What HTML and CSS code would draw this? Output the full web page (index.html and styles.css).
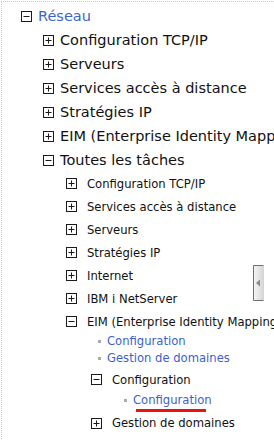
FILE: index.html
```html
<!DOCTYPE html>
<html lang="fr">
<head>
<meta charset="utf-8">
<link rel="stylesheet" href="styles.css">
</head>
<body>
<div class="pane">
  <ul class="tree root">
    <li>
      <div class="row r0"><svg class="box" viewBox="0 0 11 11"><rect x="0.5" y="0.5" width="10" height="10"/><path d="M2.5 5.5h6"/></svg><span class="lbl top">Réseau</span></div>
      <ul class="tree l1">
        <li><div class="row r1"><svg class="box" viewBox="0 0 11 11"><rect x="0.5" y="0.5" width="10" height="10"/><path d="M2.5 5.5h6M5.5 2.5v6"/></svg><span class="lbl">Configuration TCP/IP</span></div></li>
        <li><div class="row r1"><svg class="box" viewBox="0 0 11 11"><rect x="0.5" y="0.5" width="10" height="10"/><path d="M2.5 5.5h6M5.5 2.5v6"/></svg><span class="lbl">Serveurs</span></div></li>
        <li><div class="row r1"><svg class="box" viewBox="0 0 11 11"><rect x="0.5" y="0.5" width="10" height="10"/><path d="M2.5 5.5h6M5.5 2.5v6"/></svg><span class="lbl">Services accès à distance</span></div></li>
        <li><div class="row r1"><svg class="box" viewBox="0 0 11 11"><rect x="0.5" y="0.5" width="10" height="10"/><path d="M2.5 5.5h6M5.5 2.5v6"/></svg><span class="lbl">Stratégies IP</span></div></li>
        <li><div class="row r1"><svg class="box" viewBox="0 0 11 11"><rect x="0.5" y="0.5" width="10" height="10"/><path d="M2.5 5.5h6M5.5 2.5v6"/></svg><span class="lbl">EIM (Enterprise Identity Mapping)</span></div></li>
        <li>
          <div class="row r1"><svg class="box" viewBox="0 0 11 11"><rect x="0.5" y="0.5" width="10" height="10"/><path d="M2.5 5.5h6"/></svg><span class="lbl">Toutes les tâches</span></div>
          <ul class="tree l2">
            <li><div class="row r2"><svg class="box" viewBox="0 0 11 11"><rect x="0.5" y="0.5" width="10" height="10"/><path d="M2.5 5.5h6M5.5 2.5v6"/></svg><span class="lbl">Configuration TCP/IP</span></div></li>
            <li><div class="row r2"><svg class="box" viewBox="0 0 11 11"><rect x="0.5" y="0.5" width="10" height="10"/><path d="M2.5 5.5h6M5.5 2.5v6"/></svg><span class="lbl">Services accès à distance</span></div></li>
            <li><div class="row r2"><svg class="box" viewBox="0 0 11 11"><rect x="0.5" y="0.5" width="10" height="10"/><path d="M2.5 5.5h6M5.5 2.5v6"/></svg><span class="lbl">Serveurs</span></div></li>
            <li><div class="row r2"><svg class="box" viewBox="0 0 11 11"><rect x="0.5" y="0.5" width="10" height="10"/><path d="M2.5 5.5h6M5.5 2.5v6"/></svg><span class="lbl">Stratégies IP</span></div></li>
            <li><div class="row r2"><svg class="box" viewBox="0 0 11 11"><rect x="0.5" y="0.5" width="10" height="10"/><path d="M2.5 5.5h6M5.5 2.5v6"/></svg><span class="lbl">Internet</span></div></li>
            <li><div class="row r2"><svg class="box" viewBox="0 0 11 11"><rect x="0.5" y="0.5" width="10" height="10"/><path d="M2.5 5.5h6M5.5 2.5v6"/></svg><span class="lbl">IBM i NetServer</span></div></li>
            <li>
              <div class="row r2"><svg class="box" viewBox="0 0 11 11"><rect x="0.5" y="0.5" width="10" height="10"/><path d="M2.5 5.5h6"/></svg><span class="lbl">EIM (Enterprise Identity Mapping)</span></div>
              <ul class="tree l3">
                <li><div class="row link first"><span class="dot"></span><a class="lnk">Configuration</a></div></li>
                <li><div class="row link"><span class="dot"></span><a class="lnk">Gestion de domaines</a></div></li>
                <li>
                  <div class="row r3"><svg class="box" viewBox="0 0 11 11"><rect x="0.5" y="0.5" width="10" height="10"/><path d="M2.5 5.5h6"/></svg><span class="lbl">Configuration</span></div>
                  <ul class="tree l4">
                    <li><div class="row link l4link"><span class="dot"></span><a class="lnk marked">Configuration</a></div></li>
                  </ul>
                </li>
                <li><div class="row r3 last"><svg class="box" viewBox="0 0 11 11"><rect x="0.5" y="0.5" width="10" height="10"/><path d="M2.5 5.5h6M5.5 2.5v6"/></svg><span class="lbl">Gestion de domaines</span></div></li>
              </ul>
            </li>
          </ul>
        </li>
      </ul>
    </li>
  </ul>
  <svg class="collapse" viewBox="0 0 11 36" aria-hidden="true">
    <defs>
      <linearGradient id="g" x1="0" x2="1" y1="0" y2="0">
        <stop offset="0" stop-color="#f4f4f4"/>
        <stop offset="1" stop-color="#d4d4d4"/>
      </linearGradient>
    </defs>
    <rect x="1" y="1" width="10" height="34" fill="url(#g)"/>
    <path d="M10.5 0.5H0.5V35.5H10.5" fill="none" stroke="#6e6e6e"/>
    <path d="M3 18L7 14.5V21.5Z" fill="#8a8a8a"/>
  </svg>
</div>
</body>
</html>
```
FILE: styles.css
```css
html, body {
  margin: 0;
  padding: 0;
  background: #ffffff;
}

body {
  font-family: "DejaVu Sans", Verdana, sans-serif;
  color: #111;
  width: 274px;
  height: 440px;
  overflow: hidden;
}

.pane {
  position: relative;
  height: 439px;
  margin: 1px 0 0 1px;
  border-top: 1px dotted #c8c8c8;
  border-left: 1px dotted #c8c8c8;
  padding-top: 2px;
  white-space: nowrap;
  overflow: hidden;
}

.tree {
  list-style: none;
  margin: 0;
  padding: 0;
}

.root { padding-left: 19px; }
.l1 { padding-left: 22px; }
.l2 { padding-left: 23px; }
.l3 { padding-left: 25px; }
.l4 { padding-left: 26px; }

.row {
  display: flex;
  align-items: center;
}

.box {
  width: 11px;
  height: 11px;
  flex: none;
}
.box rect {
  fill: #fff;
  stroke: #1a1a1a;
  stroke-width: 1;
}
.box path {
  stroke: #1a1a1a;
  stroke-width: 1;
  fill: none;
}

.r0 { height: 24px; font-size: 14.5px; }
.r0 .lbl { margin-left: 6px; }
.top { color: #3a66cc; }

.r1 { height: 24px; font-size: 14.5px; }
.r1 .lbl { margin-left: 6px; }

.r2 { height: 23px; font-size: 11.6px; }
.r2 .lbl { margin-left: 10px; }

.r3 { height: 25px; font-size: 11.6px; }
.r3 .lbl { margin-left: 10px; }
.r3.last { height: 30px; }

.link {
  height: 18px;
  font-size: 11.6px;
  margin-left: 7px;
}
.link.first { height: 16px; }
.l4link { height: 16px; }

.dot {
  width: 3px;
  height: 3px;
  background: #aaaaaa;
  flex: none;
  margin-right: 6px;
}

.lnk {
  color: #3d5fd0;
  text-decoration: none;
}

.marked {
  position: relative;
}
.marked::after {
  content: "";
  position: absolute;
  left: 3px;
  width: 70px;
  top: 16px;
  height: 3px;
  background: #ee1111;
}

.collapse {
  position: absolute;
  left: 251px;
  top: 263px;
  width: 11px;
  height: 36px;
}
```
